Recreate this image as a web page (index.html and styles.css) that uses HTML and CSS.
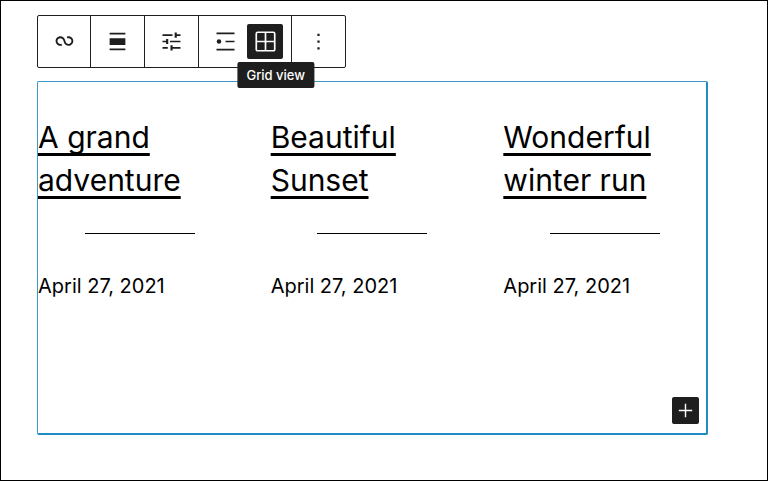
FILE: index.html
```html
<!DOCTYPE html>
<html lang="en">
<head>
    <meta charset="UTF-8">
    <meta name="viewport" content="width=device-width, initial-scale=1">
    <title>Query Loop</title>
    <link rel="stylesheet" href="styles.css">
</head>
<body>
    <main class="editor">
        <div class="toolbar" role="toolbar" aria-label="Block tools">
            <div class="group">
                <button type="button" class="tool" aria-label="Query Loop">
                    <svg viewBox="0 0 24 24"><path d="M18.18 11.64C18.18 13.08 17.01 14.25 15.57 14.25C14.36 14.25 13.34 13.42 13.05 12.29L13.04 12.26L13.03 12.23L12.4 10.38L12.39 10.38C11.86 8.65 10.25 7.39 8.34 7.39C6 7.39 4.09 9.29 4.09 11.64C4.09 13.98 6 15.88 8.34 15.88C8.88 15.88 9.41 15.78 9.89 15.59L9.29 14.07C9 14.19 8.68 14.25 8.34 14.25C6.9 14.25 5.73 13.08 5.73 11.64C5.73 10.2 6.9 9.03 8.34 9.03C9.55 9.03 10.58 9.86 10.87 10.99L10.88 10.98L11.47 12.73C11.95 14.55 13.6 15.88 15.57 15.88C17.92 15.88 19.82 13.98 19.82 11.64C19.82 9.29 17.92 7.39 15.57 7.39C15.03 7.39 14.51 7.5 14.03 7.68L14.62 9.21C14.92 9.09 15.24 9.03 15.57 9.03C17.01 9.03 18.18 10.2 18.18 11.64Z"/></svg>
                </button>
            </div>
            <div class="group">
                <button type="button" class="tool" aria-label="Align">
                    <svg viewBox="0 0 24 24"><path d="M5 15h14V9H5v6zm0 4.8h14v-1.5H5v1.5zM5 4.2v1.5h14V4.2H5z"/></svg>
                </button>
            </div>
            <div class="group">
                <button type="button" class="tool" aria-label="Display settings">
                    <svg viewBox="0 0 24 24">
                        <path class="line" d="M4 6.3h8.9M15.8 6.3H20M4 12h4M10.7 12H20M4 17.7h4.7M12 17.7h8"/>
                        <path d="M14.8 4.1h1.9v4.5h-1.9zM7.2 9.8h1.9v4.5H7.2zM11.1 15.4H13v4.5h-1.9z"/>
                    </svg>
                </button>
            </div>
            <div class="group">
                <button type="button" class="tool" aria-label="List view">
                    <svg viewBox="0 0 24 24"><path class="line" d="M4 4.8h16M12 12h8M4 19.2h16"/><circle cx="6.2" cy="12" r="2"/></svg>
                </button>
                <button type="button" class="tool active" aria-pressed="true" aria-describedby="tip">
                    <svg viewBox="0 0 24 24"><path class="line" d="M5 3.8h14q1.2 0 1.2 1.2v14q0 1.2-1.2 1.2H5q-1.2 0-1.2-1.2V5q0-1.2 1.2-1.2zM12 3.8v16.4M3.8 12h16.4"/></svg>
                    <span class="tooltip" id="tip" role="tooltip">Grid view</span>
                </button>
            </div>
            <div class="group">
                <button type="button" class="tool" aria-label="Options">
                    <svg viewBox="0 0 24 24"><path d="M11 5h2v2h-2zM11 11h2v2h-2zM11 17h2v2h-2z"/></svg>
                </button>
            </div>
        </div>

        <section class="block">
            <div class="posts">
                <article>
                    <h2><a href="#">A grand adventure</a></h2>
                    <hr>
                    <time datetime="2021-04-27">April 27, 2021</time>
                </article>
                <article>
                    <h2><a href="#">Beautiful Sunset</a></h2>
                    <hr>
                    <time datetime="2021-04-27">April 27, 2021</time>
                </article>
                <article>
                    <h2><a href="#">Wonderful winter run</a></h2>
                    <hr>
                    <time datetime="2021-04-27">April 27, 2021</time>
                </article>
            </div>
            <button type="button" class="add" aria-label="Add block">
                <svg viewBox="0 0 24 24"><path class="line" d="M12 5v14M5 12h14"/></svg>
            </button>
        </section>
    </main>
</body>
</html>
```
FILE: styles.css
```css
* {
    box-sizing: border-box;
}

body {
    margin: 0;
    background: #fff;
    color: #000;
    font-family: Inter, "Liberation Sans", sans-serif;
}

.editor {
    min-height: 100vh;
    padding: 14px 59px 45px 36px;
    border: 1px solid #000;
}

button {
    padding: 0;
    border: 0;
    border-radius: 2px;
    background: none;
    color: #1e1e1e;
    font: inherit;
    cursor: pointer;
}

svg {
    display: block;
    fill: currentColor;
}

.line {
    fill: none;
    stroke: currentColor;
    stroke-width: 1.5;
}

/* Toolbar */
.toolbar {
    display: flex;
    width: fit-content;
    border: 1px solid #1e1e1e;
    border-radius: 2px;
}

.group {
    display: flex;
    gap: 3px;
    padding: 8px;
}

.group + .group {
    border-left: 1px solid #1e1e1e;
}

.tool {
    position: relative;
    display: flex;
    align-items: center;
    justify-content: center;
    width: 36px;
    height: 35px;
}

.group + .group .tool {
    width: 37px;
}

.tool svg {
    width: 27px;
    height: 27px;
}

.group + .group .active {
    width: 36px;
    background: #1e1e1e;
    color: #fff;
}

.tooltip {
    position: absolute;
    top: 38px;
    left: 50%;
    z-index: 1;
    padding: 0 9px;
    border-radius: 2px;
    background: #1e1e1e;
    color: #fff;
    font-size: 13px;
    font-weight: 500;
    line-height: 26px;
    white-space: nowrap;
    transform: translateX(-36%);
}

/* Query block */
.block {
    display: flex;
    flex-direction: column;
    min-height: 354px;
    margin-top: 13px;
    padding: 34px 7px 9px 0;
    border: 1px solid #3f98cb;
    border-right: 2px solid #1f8ac4;
    border-bottom: 2px solid #1f8ac4;
    border-radius: 2px;
}

.posts {
    display: grid;
    grid-template-columns: repeat(3, 1fr);
    gap: 29px;
    margin-right: -8px;
}

h2 {
    margin: 0;
    font-size: 30px;
    font-weight: 400;
    line-height: 43px;
}

h2 a {
    color: inherit;
    text-decoration: underline;
    text-decoration-thickness: 3px;
    text-decoration-skip-ink: none;
    text-underline-offset: 5px;
}

hr {
    width: 110px;
    margin: 31px auto;
    border: 0;
    border-top: 1px solid #000;
}

time {
    display: block;
    font-size: 20px;
    line-height: 42px;
}

.add {
    display: flex;
    align-items: center;
    justify-content: center;
    width: 27px;
    height: 27px;
    margin-top: auto;
    margin-left: auto;
    background: #1e1e1e;
    color: #fff;
}

.add svg {
    width: 23px;
    height: 23px;
}
```
